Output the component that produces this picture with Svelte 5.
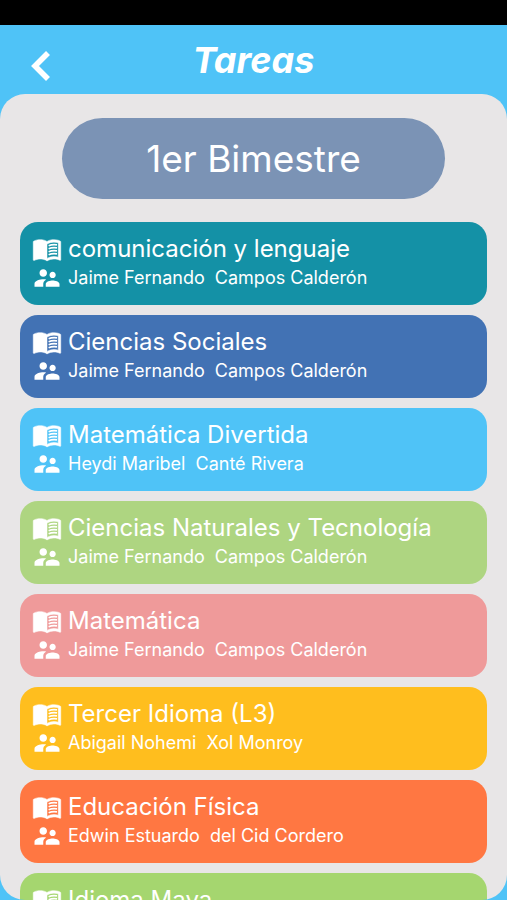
<script lang="ts">
	type Course = { name: string; teacher: string; color: string };

	let period = '1er Bimestre';

	let courses: Course[] = [
		{ name: 'comunicación y lenguaje', teacher: 'Jaime Fernando  Campos Calderón', color: '#1491a6' },
		{ name: 'Ciencias Sociales', teacher: 'Jaime Fernando  Campos Calderón', color: '#4272b4' },
		{ name: 'Matemática Divertida', teacher: 'Heydi Maribel  Canté Rivera', color: '#4fc3f7' },
		{ name: 'Ciencias Naturales y Tecnología', teacher: 'Jaime Fernando  Campos Calderón', color: '#aed581' },
		{ name: 'Matemática', teacher: 'Jaime Fernando  Campos Calderón', color: '#ef9a9a' },
		{ name: 'Tercer Idioma (L3)', teacher: 'Abigail Nohemi  Xol Monroy', color: '#ffbe1e' },
		{ name: 'Educación Física', teacher: 'Edwin Estuardo  del Cid Cordero', color: '#ff7742' },
		{ name: 'Idioma Maya', teacher: 'Jaime Fernando  Campos Calderón', color: '#a5d66f' }
	];
</script>

<div class="screen">
	<div class="status-bar"></div>

	<header>
		<button class="back" type="button" aria-label="Regresar">
			<svg viewBox="0 0 20 32" width="20" height="32" aria-hidden="true">
				<path d="M18 3 5 16l13 13" fill="none" stroke="#fff" stroke-width="5.6" />
			</svg>
		</button>
		<h1>Tareas</h1>
	</header>

	<main>
		<button class="period" type="button">{period}</button>

		<ul>
			{#each courses as course}
				<li>
					<button class="card" type="button" style:background-color={course.color}>
						<span class="row name">
							<svg viewBox="0 0 24 24" aria-hidden="true">
								<path
									d="M21 5c-1.11-.35-2.33-.5-3.5-.5-1.95 0-4.05.4-5.5 1.5-1.45-1.1-3.55-1.5-5.5-1.5S2.45 4.9 1 6v14.65c0 .25.25.5.5.5.1 0 .15-.05.25-.05C3.1 20.45 5.05 20 6.5 20c1.95 0 4.05.4 5.5 1.5 1.35-.85 3.8-1.5 5.5-1.5 1.65 0 3.35.3 4.75 1.05.1.05.15.05.25.05.25 0 .5-.25.5-.5V6c-.6-.45-1.25-.75-2-1zm0 13.5c-1.1-.35-2.3-.5-3.5-.5-1.7 0-4.15.65-5.5 1.5V8c1.35-.85 3.8-1.5 5.5-1.5 1.2 0 2.4.15 3.5.5v11.5z"
									stroke="#fff"
									stroke-width="0.4"
								/>
								<path
									d="M13.3 9.4c2-.9 4.4-1.1 6.7-.7M13.3 11.8c2-.9 4.4-1.1 6.7-.7M13.3 14.2c2-.9 4.4-1.1 6.7-.7M13.3 16.6c2-.9 4.4-1.1 6.7-.7"
									fill="none"
									stroke="#fff"
									stroke-width="1.3"
								/>
							</svg>
							<span>{course.name}</span>
						</span>
						<span class="row teacher">
							<svg viewBox="0 0 24 24" aria-hidden="true">
								<path
									d="M16.5 12c1.38 0 2.49-1.12 2.49-2.5S17.88 7 16.5 7 14 8.12 14 9.5s1.12 2.5 2.5 2.5zM9 11c1.66 0 2.99-1.34 2.99-3S10.66 5 9 5 6 6.34 6 8s1.34 3 3 3zm7.5 3c-1.83 0-5.5.92-5.5 2.75V19h11v-2.25c0-1.83-3.67-2.75-5.5-2.75zM9 13c-2.33 0-7 1.17-7 3.5V19h7v-2.25c0-.85.33-2.34 2.37-3.47C10.5 13.1 9.66 13 9 13z"
								/>
							</svg>
							<span>{course.teacher}</span>
						</span>
					</button>
				</li>
			{/each}
		</ul>
	</main>
</div>

<style>
	:global(body) {
		margin: 0;
		background-color: #4fc3f7;
	}

	.screen {
		display: flex;
		flex-direction: column;
		height: 100vh;
		font-family: Inter, 'Liberation Sans', sans-serif;
		color: #fff;
	}

	.status-bar {
		flex: none;
		height: 25px;
		background-color: #000;
	}

	header {
		flex: none;
		display: grid;
		grid-template-columns: 60px 1fr 60px;
		height: 69px;
	}

	button {
		border: 0;
		color: inherit;
		font: inherit;
		cursor: pointer;
	}

	.back {
		display: flex;
		align-items: center;
		justify-content: flex-end;
		padding: 12px 10px 0 0;
		background: none;
	}

	h1 {
		margin: 0;
		padding-top: 12px;
		font-size: 36px;
		font-style: italic;
		font-weight: 700;
		line-height: 46px;
		text-align: center;
	}

	main {
		flex: 1;
		min-height: 0;
		box-sizing: border-box;
		padding: 24px 20px 0;
		border-radius: 25px;
		background-color: #e8e6e7;
		overflow-y: auto;
		scrollbar-width: none;
	}

	.period {
		display: block;
		width: 82%;
		height: 81px;
		margin: 0 auto 23px;
		border-radius: 41px;
		background-color: #7b93b5;
		font-size: 37px;
	}

	ul {
		display: flex;
		flex-direction: column;
		gap: 10px;
		margin: 0;
		padding: 0;
		list-style: none;
	}

	.card {
		display: block;
		width: 100%;
		padding: 12px 12px 13px;
		border-radius: 18px;
		text-align: left;
	}

	.row {
		display: flex;
		align-items: center;
		gap: 6px;
		height: 29px;
	}

	.row span {
		white-space: pre;
	}

	.row svg {
		flex: none;
		width: 30px;
		height: 30px;
		fill: #fff;
	}

	.name {
		font-size: 24px;
		line-height: 29px;
	}

	.teacher {
		font-size: 18px;
		line-height: 29px;
	}
</style>
